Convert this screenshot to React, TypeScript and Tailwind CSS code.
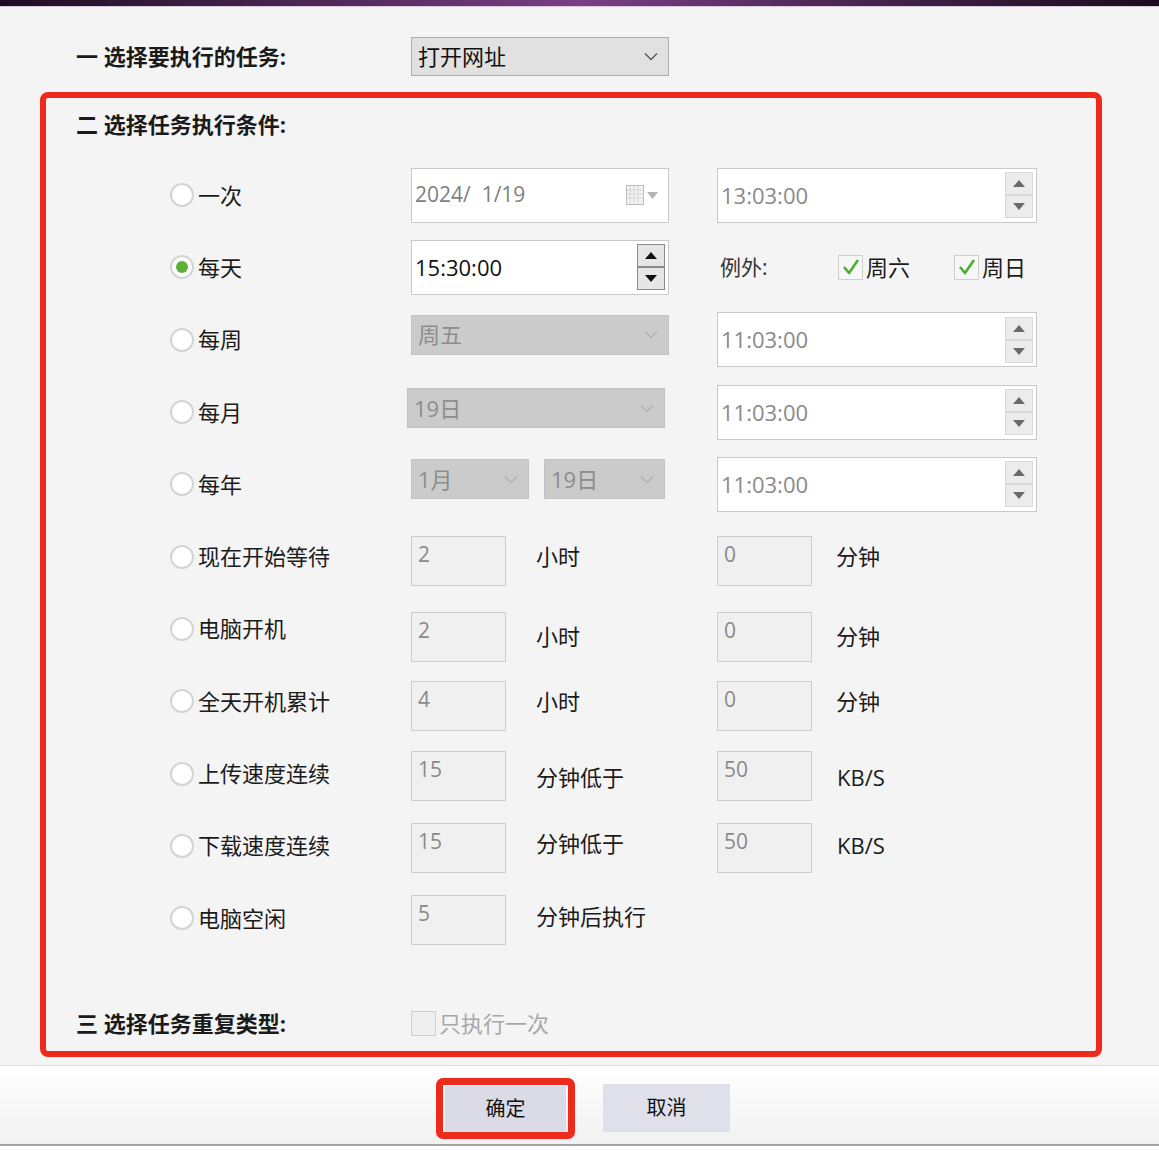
import React from "react";

const FONT = { fontFamily: '"Open Sans", "Noto Sans CJK SC", sans-serif' };

function Chevron({ color = "#777" }: { color?: string }) {
  return (
    <svg width="14" height="9" viewBox="0 0 14 9">
      <polyline points="1,1.5 7,7.5 13,1.5" fill="none" stroke={color} strokeWidth="1.3" />
    </svg>
  );
}

function Radio({ checked = false }: { checked?: boolean }) {
  return (
    <div className="w-[24px] h-[24px] rounded-full border-2 border-[#d4d4d4] bg-white flex items-center justify-center shrink-0">
      {checked && <div className="w-[12px] h-[12px] rounded-full bg-[#5cb035]" />}
    </div>
  );
}

function Check({ checked = true, disabled = false }: { checked?: boolean; disabled?: boolean }) {
  return (
    <div
      className={`w-[25px] h-[25px] border border-[#cfcfcf] flex items-center justify-center shrink-0 ${
        disabled ? "bg-[#efefef]" : "bg-[#f7f7f7]"
      }`}
    >
      {checked && (
        <svg width="20" height="18" viewBox="0 0 20 18">
          <polyline points="3,9 8,15 17,2" fill="none" stroke="#4daf2f" strokeWidth="2.6" strokeLinejoin="round" />
        </svg>
      )}
    </div>
  );
}

function SpinButtons({ dark = false }: { dark?: boolean }) {
  const btn = dark
    ? "w-[28px] h-[23px] bg-[#e6e6e6] border border-[#8a8a8a] flex items-center justify-center"
    : "w-[28px] h-[23px] bg-[#ececec] border border-[#dadada] flex items-center justify-center";
  const fill = dark ? "#111" : "#6a6a6a";
  return (
    <div className="flex flex-col">
      <div className={btn}>
        <svg width="12" height="7" viewBox="0 0 12 7">
          <polygon points="6,0 12,7 0,7" fill={fill} />
        </svg>
      </div>
      <div className={btn}>
        <svg width="12" height="7" viewBox="0 0 12 7">
          <polygon points="0,0 12,0 6,7" fill={fill} />
        </svg>
      </div>
    </div>
  );
}

function SpinBox({ value, dark = false, width }: { value: string; dark?: boolean; width: string }) {
  return (
    <div className={`${width} h-[55px] bg-white border border-[#c9c9c9] flex items-center justify-between pl-[3px] pr-[3px]`}>
      <span className={`text-[22px] ${dark ? "text-[#111]" : "text-[#8a8a8a]"}`}>{value}</span>
      <SpinButtons dark={dark} />
    </div>
  );
}

function DisabledSelect({ value, width, className = "" }: { value: string; width: string; className?: string }) {
  return (
    <div className={`${width} h-[40px] bg-[#cbcbcb] border border-[#c2c2c2] flex items-center justify-between pl-[6px] pr-[10px] ${className}`}>
      <span className="text-[22px] text-[#8d8d8d]">{value}</span>
      <Chevron color="#b0b0b0" />
    </div>
  );
}

function SmallBox({ value, className = "" }: { value: string; className?: string }) {
  return (
    <div className={`w-[95px] h-[50px] bg-[#f0f0f0] border border-[#cdcdcd] pl-[6px] pt-[2px] shrink-0 ${className}`}>
      <span className="text-[21px] text-[#8a8a8a] leading-[30px]">{value}</span>
    </div>
  );
}

function Row({
  checked = false,
  label,
  col2,
  col3,
}: {
  checked?: boolean;
  label: string;
  col2: React.ReactNode;
  col3?: React.ReactNode;
}) {
  return (
    <div className="h-[72.3px] grid grid-cols-[241px_258px_48px_320px] items-center">
      <div className="flex items-center gap-[4px]">
        <Radio checked={checked} />
        <span className="text-[22px] text-[#1b1b1b]">{label}</span>
      </div>
      <div className="flex items-center">{col2}</div>
      <div />
      <div className="flex items-center">{col3}</div>
    </div>
  );
}

function PairCell({
  value,
  unit,
  gap,
  boxClass = "",
  unitClass = "",
}: {
  value: string;
  unit: string;
  gap: string;
  boxClass?: string;
  unitClass?: string;
}) {
  return (
    <div className="flex items-center">
      <SmallBox value={value} className={boxClass} />
      <span className={`text-[22px] text-[#1b1b1b] ${gap} ${unitClass} whitespace-nowrap`}>{unit}</span>
    </div>
  );
}

export default function App() {
  return (
    <div className="w-[1159px] h-[1151px] bg-[#f4f4f4] flex flex-col overflow-hidden" style={FONT}>
      {/* top bar */}
      <div className="h-[7px] bg-gradient-to-r from-[#1e0d22] via-[#7a3f86] to-[#1a0c1c] border-b border-[#d9c9dc]" />

      {/* section 1 */}
      <div className="mt-[30px] h-[39px] flex items-center">
        <div className="w-[411px] pl-[76px] text-[22px] font-bold text-[#1a1a1a]">一 选择要执行的任务:</div>
        <div className="w-[258px] h-[39px] bg-[#e1e1e1] border border-[#adadad] flex items-center justify-between pl-[6px] pr-[10px]">
          <span className="text-[22px] text-[#111]">打开网址</span>
          <Chevron color="#555" />
        </div>
      </div>

      {/* red box */}
      <div className="mt-[16px] ml-[40px] w-[1062px] h-[965px] border-[6px] border-[#ee2a1c] rounded-[8px] flex flex-col">
        <div className="pl-[30px] pt-[10px] h-[61px] text-[22px] font-bold text-[#1a1a1a]">二 选择任务执行条件:</div>

        <div className="pl-[124px] flex flex-col">
          <Row
            label="一次"
            col2={
              <div className="w-[258px] h-[55px] bg-white border border-[#c9c9c9] flex items-center justify-between pl-[3px] pr-[10px]">
                <span className="text-[21px] text-[#7f7f7f] whitespace-pre">2024/  1/19</span>
                <div className="flex items-center gap-[3px]">
                  <svg width="18" height="20" viewBox="0 0 18 20">
                    <rect x="0.5" y="0.5" width="17" height="19" fill="#f3f3f3" stroke="#bdbdbd" />
                    <path d="M4 1v18M8 1v18M12 1v18M1 5h16M1 9h16M1 13h16" stroke="#d6d6d6" strokeWidth="1" />
                  </svg>
                  <svg width="11" height="7" viewBox="0 0 11 7">
                    <polygon points="0,0 11,0 5.5,7" fill="#b3b3b3" />
                  </svg>
                </div>
              </div>
            }
            col3={<SpinBox value="13:03:00" width="w-[320px]" />}
          />
          <Row
            checked
            label="每天"
            col2={<SpinBox value="15:30:00" dark width="w-[258px]" />}
            col3={
              <div className="flex items-center pl-[3px]">
                <span className="text-[21px] text-[#333] w-[118px]">例外:</span>
                <Check />
                <span className="text-[22px] text-[#1b1b1b] ml-[3px] w-[88px]">周六</span>
                <Check />
                <span className="text-[22px] text-[#1b1b1b] ml-[3px]">周日</span>
              </div>
            }
          />
          <Row
            label="每周"
            col2={<DisabledSelect value="周五" width="w-[258px]" className="-mt-[10px]" />}
            col3={<SpinBox value="11:03:00" width="w-[320px]" />}
          />
          <Row
            label="每月"
            col2={<DisabledSelect value="19日" width="w-[258px]" className="-ml-[4px] -mt-[8px]" />}
            col3={<SpinBox value="11:03:00" width="w-[320px]" />}
          />
          <Row
            label="每年"
            col2={
              <div className="flex items-center gap-[15px] -mt-[10px]">
                <DisabledSelect value="1月" width="w-[118px]" />
                <DisabledSelect value="19日" width="w-[121px]" />
              </div>
            }
            col3={<SpinBox value="11:03:00" width="w-[320px]" />}
          />
          <Row
            label="现在开始等待"
            col2={<PairCell value="2" unit="小时" gap="ml-[30px]" boxClass="mt-[8px]" />}
            col3={<PairCell value="0" unit="分钟" gap="ml-[24px]" boxClass="mt-[8px]" />}
          />
          <Row
            label="电脑开机"
            col2={<PairCell value="2" unit="小时" gap="ml-[30px]" boxClass="mt-[16px]" unitClass="mt-[16px]" />}
            col3={<PairCell value="0" unit="分钟" gap="ml-[24px]" boxClass="mt-[16px]" unitClass="mt-[16px]" />}
          />
          <Row
            label="全天开机累计"
            col2={<PairCell value="4" unit="小时" gap="ml-[30px]" boxClass="mt-[10px]" />}
            col3={<PairCell value="0" unit="分钟" gap="ml-[24px]" boxClass="mt-[10px]" />}
          />
          <Row
            label="上传速度连续"
            col2={<PairCell value="15" unit="分钟低于" gap="ml-[30px]" boxClass="mt-[4px]" unitClass="mt-[8px]" />}
            col3={<PairCell value="50" unit="KB/S" gap="ml-[25px]" boxClass="mt-[4px]" unitClass="mt-[8px]" />}
          />
          <Row
            label="下载速度连续"
            col2={<PairCell value="15" unit="分钟低于" gap="ml-[30px]" boxClass="mt-[4px]" unitClass="-mt-[4px]" />}
            col3={<PairCell value="50" unit="KB/S" gap="ml-[25px]" boxClass="mt-[4px]" />}
          />
          <Row label="电脑空闲" col2={<PairCell value="5" unit="分钟后执行" gap="ml-[30px]" boxClass="mt-[4px]" unitClass="-mt-[4px]" />} />
        </div>

        <div className="mt-auto mb-[8px] h-[40px] flex items-center">
          <div className="w-[365px] pl-[30px] text-[22px] font-bold text-[#1a1a1a]">三 选择任务重复类型:</div>
          <Check checked={false} disabled />
          <span className="text-[22px] text-[#a8a8a8] ml-[3px]">只执行一次</span>
        </div>
      </div>

      {/* footer */}
      <div className="mt-[8px] h-[1px] bg-[#dbe6da]" />
      <div className="h-[80px] bg-gradient-to-b from-white to-[#f1f1f1] flex items-center pl-[436px] pt-[6px] border-b-2 border-[#a3a3a3]">
        <div className="border-[7px] border-[#ee2a1c] rounded-[7px] p-[2px] pt-[1px] pb-[0px]">
          <div className="w-[121px] h-[46px] bg-[#dadbe6] flex items-center justify-center text-[20px] text-[#111]">确定</div>
        </div>
        <div className="ml-[28px] w-[127px] h-[48px] bg-[#dfe0ea] flex items-center justify-center text-[20px] text-[#111]">取消</div>
      </div>
      <div className="flex-1 bg-white" />
    </div>
  );
}
